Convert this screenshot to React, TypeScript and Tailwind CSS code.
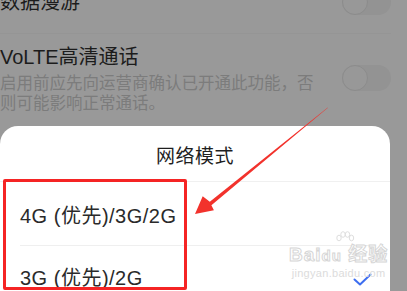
import React from 'react';

const font = 'font-["Liberation_Sans","Noto_Sans_CJK_SC",sans-serif]';

function Toggle() {
  return (
    <div className="flex h-[26px] w-[49px] shrink-0 items-center rounded-full bg-[#939393]">
      <div className="size-[26px] rounded-full border border-[#8c8c8c] bg-[#989898]" />
    </div>
  );
}

function Arrow() {
  return (
    <svg className="pointer-events-none absolute left-0 top-0" width="407" height="291">
      <polygon
        points="327.4,107.6 326.8,108.2 209.8,201.8 202.7,196.3 195,214 213.9,210.3 211.4,205.2 327.6,108.0"
        fill="#f2322c"
      />
    </svg>
  );
}

function Check() {
  return (
    <svg width="19" height="13" viewBox="0 0 19 13" className="shrink-0">
      <path d="M1.5 6.5 L7 11.5 L17.5 1.5" fill="none" stroke="#3d6ef0" strokeWidth="2" strokeLinecap="round" strokeLinejoin="round" />
    </svg>
  );
}

function Paw() {
  return (
    <svg width="20" height="14" viewBox="0 0 20 14" fill="none" stroke="#dedede" strokeWidth="1">
      <ellipse cx="4" cy="7" rx="2.2" ry="2.8" />
      <ellipse cx="8" cy="3.5" rx="2.2" ry="2.8" />
      <ellipse cx="12.5" cy="3.5" rx="2.2" ry="2.8" />
      <ellipse cx="16.5" cy="7" rx="2.2" ry="2.8" />
    </svg>
  );
}

export default function App() {
  return (
    <div className={`relative h-[291px] w-[407px] overflow-hidden bg-[#999999] ${font}`}>
      {/* settings list behind the sheet */}
      <div className="-mt-[13px] flex flex-col pr-[16px]">
        <div className="flex h-[30px] items-center justify-between">
          <span className="text-[20px] leading-[28px] text-[#1c1c1c]">数据漫游</span>
          <Toggle />
        </div>
        <div className="mt-[16px] h-px bg-[#959595]" />
        <div className="flex items-center justify-between pt-[9px]">
          <div className="flex flex-col">
            <span className="text-[20px] leading-[28px] text-[#1c1c1c]">VoLTE高清通话</span>
            <span className="mt-[2px] w-[320px] text-[16.5px] leading-[20px] text-[#7c7c7c]">
              启用前应先向运营商确认已开通此功能，否则可能影响正常通话。
            </span>
          </div>
          <Toggle />
        </div>
      </div>

      {/* bottom sheet */}
      <div className="mt-[13px] w-[390px] rounded-t-[18px] bg-white">
        <div className="flex h-[55px] items-center justify-center pt-[7px] text-[19px] tracking-[0.5px] text-[#1f1f1f]">
          网络模式
        </div>
        <div className="h-px bg-[#f0f0f0]" />
        <div className="flex h-[63px] items-center pl-[20px] pt-[4px] text-[20px] tracking-[0.5px] text-[#2a2a2a]">
          4G (优先)/3G/2G
        </div>
        <div className="ml-[20px] mr-[18px] h-px bg-[#efefef]" />
        <div className="relative flex h-[63px] items-center justify-between pl-[20px] pr-[18px] pt-[1px] text-[20px] tracking-[0.5px] text-[#2a2a2a]">
          <span>3G (优先)/2G</span>
          <div className="pt-[2px]">
            <Check />
          </div>
          <div className="absolute left-[289px] top-[-15px] flex flex-col items-center leading-none">
            <div className="ml-[12px]">
              <Paw />
            </div>
            <span className="text-[19px] font-bold tracking-[1px] text-white [-webkit-text-stroke:1px_#d6d6d6]">
              Bai<span className="text-[15px]">du</span> 经验
            </span>
            <span className="mt-[4px] text-[11px] tracking-[0.3px] text-[#dcdcdc]">jingyan.baidu.com</span>
          </div>
        </div>
      </div>

      {/* annotation */}
      <div className="absolute left-[3px] top-[179px] h-[111px] w-[184px] rounded-[2px] border-[3px] border-[#f52424]" />
      <Arrow />
    </div>
  );
}
